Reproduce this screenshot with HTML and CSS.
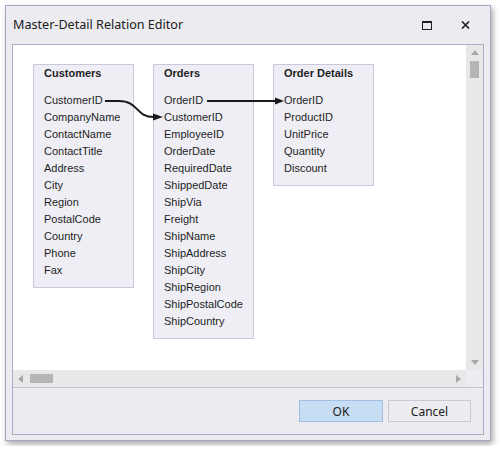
FILE: index.html
```html
<!DOCTYPE html>
<html>
<head>
<meta charset="utf-8">
<link rel="stylesheet" href="styles.css">
</head>
<body>
<div class="window">
  <div class="titlebar">
    <span class="title">Master-Detail Relation Editor</span>
    <div class="controls">
      <span class="ctl"><span class="max-icon"></span></span>
      <span class="ctl">
        <svg width="9" height="8" viewBox="0 0 9 8"><path d="M1 0.5 L8 7.5 M8 0.5 L1 7.5" stroke="#202020" stroke-width="1.6" fill="none"/></svg>
      </span>
    </div>
  </div>
  <div class="client">
    <div class="viewport">
      <div class="canvas">
        <div class="table t-customers">
          <div class="t-head">Customers</div>
          <ul class="fields">
            <li>CustomerID</li><li>CompanyName</li><li>ContactName</li><li>ContactTitle</li><li>Address</li><li>City</li><li>Region</li><li>PostalCode</li><li>Country</li><li>Phone</li><li>Fax</li>
          </ul>
        </div>
        <div class="table t-orders">
          <div class="t-head">Orders</div>
          <ul class="fields">
            <li>OrderID</li><li>CustomerID</li><li>EmployeeID</li><li>OrderDate</li><li>RequiredDate</li><li>ShippedDate</li><li>ShipVia</li><li>Freight</li><li>ShipName</li><li>ShipAddress</li><li>ShipCity</li><li>ShipRegion</li><li>ShipPostalCode</li><li>ShipCountry</li>
          </ul>
        </div>
        <div class="table t-details">
          <div class="t-head">Order Details</div>
          <ul class="fields">
            <li>OrderID</li><li>ProductID</li><li>UnitPrice</li><li>Quantity</li><li>Discount</li>
          </ul>
        </div>
        <svg class="links" width="453" height="325" viewBox="0 0 453 325">
          <path d="M92 56 H106 C126 56 122 72 141 72" stroke="#1a1a1a" stroke-width="2" fill="none"/>
          <polygon points="140,68.5 150,72 140,75.5" fill="#1a1a1a"/>
          <path d="M194 56 H263" stroke="#1a1a1a" stroke-width="2" fill="none"/>
          <polygon points="262,52.5 271,56 262,59.5" fill="#1a1a1a"/>
        </svg>
      </div>
      <div class="vscroll">
        <svg class="arr" width="8" height="5" viewBox="0 0 8 5"><polygon points="0,5 8,5 4,0" fill="#a8a8a8"/></svg>
        <div class="vthumb"></div>
        <div class="spacer"></div>
        <svg class="arr" width="8" height="5" viewBox="0 0 8 5"><polygon points="0,0 8,0 4,5" fill="#a8a8a8"/></svg>
      </div>
      <div class="hscroll">
        <svg class="arr" width="5" height="8" viewBox="0 0 5 8"><polygon points="5,0 5,8 0,4" fill="#a8a8a8"/></svg>
        <div class="hthumb"></div>
        <div class="spacer"></div>
        <svg class="arr" width="5" height="8" viewBox="0 0 5 8"><polygon points="0,0 0,8 5,4" fill="#a8a8a8"/></svg>
      </div>
      <div class="corner"></div>
    </div>
    <div class="footer">
      <button class="btn btn-ok">OK</button>
      <button class="btn">Cancel</button>
    </div>
  </div>
</div>
</body>
</html>
```

FILE: styles.css
```css
html, body {
  margin: 0;
  background: #ffffff;
}
body {
  padding: 5px;
  font-family: "Liberation Sans", Arial, sans-serif;
}
.window {
  box-sizing: border-box;
  width: 486px;
  height: 436px;
  border: 1px solid #a7a7c3;
  background: #ebebf0;
  box-shadow: 2px 3px 6px rgba(0, 0, 0, 0.35);
  display: flex;
  flex-direction: column;
  padding: 0 6px 5px;
}
.titlebar {
  height: 38px;
  flex: none;
  display: flex;
  align-items: center;
}
.title {
  padding-left: 1px;
  padding-bottom: 1px;
  font-family: "Noto Sans", sans-serif;
  font-size: 12.6px;
  color: #202020;
}
.controls {
  margin-left: auto;
  display: flex;
}
.ctl {
  width: 38px;
  height: 20px;
  display: flex;
  align-items: center;
  justify-content: center;
}
.max-icon {
  box-sizing: border-box;
  width: 10px;
  height: 9px;
  border: 1px solid #202020;
  border-top-width: 2px;
}
.client {
  flex: 1;
  border: 1px solid #adadcb;
  display: flex;
  flex-direction: column;
  min-height: 0;
}
.viewport {
  display: grid;
  grid-template-columns: 453px 17px;
  grid-template-rows: 325px 17px;
  background: #ffffff;
}
.canvas {
  position: relative;
  overflow: hidden;
  background: #ffffff;
}
.table {
  position: absolute;
  top: 19px;
  width: 101px;
  box-sizing: border-box;
  background: #eeeef4;
  border: 1px solid #c9c9dc;
  padding: 0 10px 8px;
  font-size: 11px;
  color: #1e1e1e;
}
.t-customers { left: 20px; }
.t-orders { left: 140px; }
.t-details { left: 260px; }
.t-head {
  font-weight: bold;
  line-height: 17px;
  margin-bottom: 10px;
}
.fields {
  list-style: none;
  margin: 0;
  padding: 0;
}
.fields li {
  line-height: 17px;
  white-space: nowrap;
}
.links {
  position: absolute;
  left: 0;
  top: 0;
}
.vscroll {
  background: #e8e8eb;
  display: flex;
  flex-direction: column;
  align-items: center;
  padding: 5px 0 5px;
}
.vscroll .arr { flex: none; }
.vthumb {
  margin-top: 6px;
  width: 9px;
  height: 17px;
  background: #b5b5b8;
}
.spacer { flex: 1; }
.hscroll {
  background: #e8e8eb;
  display: flex;
  align-items: center;
  padding: 0 5px 0 5px;
}
.hthumb {
  margin-left: 7px;
  width: 23px;
  height: 9px;
  background: #b5b5b8;
}
.corner {
  background: #ededf1;
}
.footer {
  flex: 1;
  border-top: 1px solid #c3c3d6;
  display: flex;
  justify-content: flex-end;
  align-items: flex-start;
  gap: 5px;
  padding: 12px 12px 0 0;
}
.btn {
  box-sizing: border-box;
  height: 22px;
  width: 83px;
  margin: 0;
  padding: 0;
  border: 1px solid #cacad6;
  background: #ececf1;
  font-family: "Noto Sans", sans-serif;
  font-size: 12px;
  color: #202020;
}
.btn-ok {
  width: 84px;
  background: #c7ddf3;
  border-color: #9fc0e2;
}
```
